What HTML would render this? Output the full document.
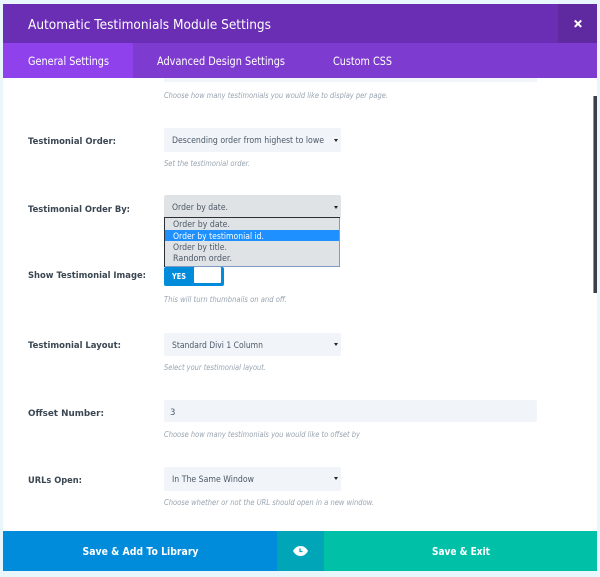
<!DOCTYPE html>
<html><head><meta charset="utf-8"><title>Module Settings</title>
<style>
html,body{margin:0;padding:0;width:600px;height:577px;overflow:hidden;background:#e9f6fc}
svg{display:block;font-family:"DejaVu Sans","Liberation Sans",sans-serif}
.t{fill:#fff;font-size:11.5px}
.l{fill:#3a4652;font-size:9px;font-weight:bold}
.d{fill:#9aa5b1;font-size:7.500px;font-style:italic}
.v{fill:#4c5866;font-size:8.500px}
.o{fill:#4c5866;font-size:8.500px}
.b{fill:#fff;font-size:10.500px;font-weight:bold}
</style></head><body>
<svg width="600" height="577" viewBox="0 0 600 577" xmlns="http://www.w3.org/2000/svg">
<rect x="3" y="4" width="594" height="567" fill="#fff"/>
<rect x="3" y="4" width="594" height="39" fill="#6a2eb4"/>
<rect x="558" y="4" width="39" height="39" fill="#5f2a9f"/>
<rect x="3" y="43" width="594" height="35" fill="#7e3bcf"/>
<rect x="3" y="43" width="130" height="35" fill="#8f42ec"/>
<text class="t" x="28" y="29" style="font-size:13.500px" textLength="243" lengthAdjust="spacingAndGlyphs">Automatic Testimonials Module Settings</text>
<path d="M574.800 20.500l6.400 6.400M581.200 20.500l-6.400 6.400" stroke="#fff" stroke-width="2" fill="none"/>
<text class="t" x="28" y="65" textLength="81" lengthAdjust="spacingAndGlyphs">General Settings</text>
<text class="t" x="157" y="65" textLength="128" lengthAdjust="spacingAndGlyphs">Advanced Design Settings</text>
<text class="t" x="333" y="65" textLength="59" lengthAdjust="spacingAndGlyphs">Custom CSS</text>

<rect x="164" y="78" width="373" height="4" fill="#f1f5f9"/>
<text class="d" x="164" y="98" textLength="224" lengthAdjust="spacingAndGlyphs">Choose how many testimonials you would like to display per page.</text>

<text class="l" x="28" y="144" textLength="88" lengthAdjust="spacingAndGlyphs">Testimonial Order:</text>
<rect x="164" y="128" width="177" height="24" rx="2" fill="#f1f5f9"/>
<text class="v" x="172" y="143" textLength="152" lengthAdjust="spacingAndGlyphs">Descending order from highest to lowe</text>
<path d="M334 139h4l-2 3z" fill="#222"/>
<text class="d" x="164" y="166" textLength="86" lengthAdjust="spacingAndGlyphs">Set the testimonial order.</text>

<text class="l" x="28" y="212" textLength="102" lengthAdjust="spacingAndGlyphs">Testimonial Order By:</text>
<rect x="164" y="195" width="177" height="23" rx="2" fill="#dfe3e6"/>
<text class="v" x="172" y="210" textLength="56" lengthAdjust="spacingAndGlyphs">Order by date.</text>
<path d="M334 206h4l-2 3z" fill="#222"/>

<rect x="164" y="267" width="60" height="19" rx="2" fill="#008bdb"/>
<rect x="194" y="267" width="27" height="16" rx="1" fill="#fff"/>
<text x="172" y="279" fill="#fff" font-size="7.500" font-weight="bold" textLength="14" lengthAdjust="spacingAndGlyphs">YES</text>

<rect x="164.500" y="217.500" width="175" height="49" fill="#dfe3e6" stroke="#7f9bc4"/>
<path d="M164.500 267V217.500H340" fill="none" stroke="#2b3036"/>
<rect x="165" y="230" width="174" height="11" fill="#1e90ff"/>
<text class="o" x="173" y="227" textLength="57" lengthAdjust="spacingAndGlyphs">Order by date.</text>
<text class="o" x="173" y="239" style="fill:#fff" textLength="91" lengthAdjust="spacingAndGlyphs">Order by testimonial id.</text>
<text class="o" x="173" y="250" textLength="54" lengthAdjust="spacingAndGlyphs">Order by title.</text>
<text class="o" x="173" y="261" textLength="59" lengthAdjust="spacingAndGlyphs">Random order.</text>

<text class="l" x="28" y="278" textLength="118" lengthAdjust="spacingAndGlyphs">Show Testimonial Image:</text>
<text class="d" x="164" y="302" textLength="123" lengthAdjust="spacingAndGlyphs">This will turn thumbnails on and off.</text>

<text class="l" x="28" y="348" textLength="93" lengthAdjust="spacingAndGlyphs">Testimonial Layout:</text>
<rect x="164" y="333" width="177" height="23" rx="2" fill="#f1f5f9"/>
<text class="v" x="172" y="348" textLength="91" lengthAdjust="spacingAndGlyphs">Standard Divi 1 Column</text>
<path d="M334 343h4l-2 3z" fill="#222"/>
<text class="d" x="164" y="370" textLength="102" lengthAdjust="spacingAndGlyphs">Select your testimonial layout.</text>

<text class="l" x="28" y="416" textLength="76" lengthAdjust="spacingAndGlyphs">Offset Number:</text>
<rect x="164" y="400" width="373" height="22" rx="2" fill="#f1f5f9"/>
<text class="v" x="170" y="415" textLength="5">3</text>
<text class="d" x="164" y="437" textLength="196" lengthAdjust="spacingAndGlyphs">Choose how many testimonials you would like to offset by</text>

<text class="l" x="28" y="483" textLength="54" lengthAdjust="spacingAndGlyphs">URLs Open:</text>
<rect x="164" y="467" width="177" height="24" rx="2" fill="#f1f5f9"/>
<text class="v" x="172" y="482" textLength="82" lengthAdjust="spacingAndGlyphs">In The Same Window</text>
<path d="M334 477h4l-2 3z" fill="#222"/>
<text class="d" x="164" y="505" textLength="210" lengthAdjust="spacingAndGlyphs">Choose whether or not the URL should open in a new window.</text>

<rect x="593" y="96" width="4" height="197" fill="#3a4045"/>
<rect x="593" y="96" width="1" height="197" fill="#8b9094"/>

<rect x="3" y="531" width="274" height="40" fill="#008bdb"/>
<rect x="277" y="531" width="47" height="40" fill="#00a5b7"/>
<rect x="324" y="531" width="273" height="40" fill="#00c1a8"/>
<text class="b" x="82.500" y="555" textLength="116" lengthAdjust="spacingAndGlyphs">Save &amp; Add To Library</text>
<text class="b" x="432" y="555" textLength="58" lengthAdjust="spacingAndGlyphs">Save &amp; Exit</text>
<path d="M293 551c2-3.500 4.500-5 7.500-5s5.500 1.500 7.500 5c-2 3.500-4.500 5-7.500 5s-5.500-1.500-7.500-5z" fill="#fff"/>
<path d="M300 548.500v3h2.500" fill="none" stroke="#00a5b7" stroke-width="1.300"/>
</svg>
</body></html>
